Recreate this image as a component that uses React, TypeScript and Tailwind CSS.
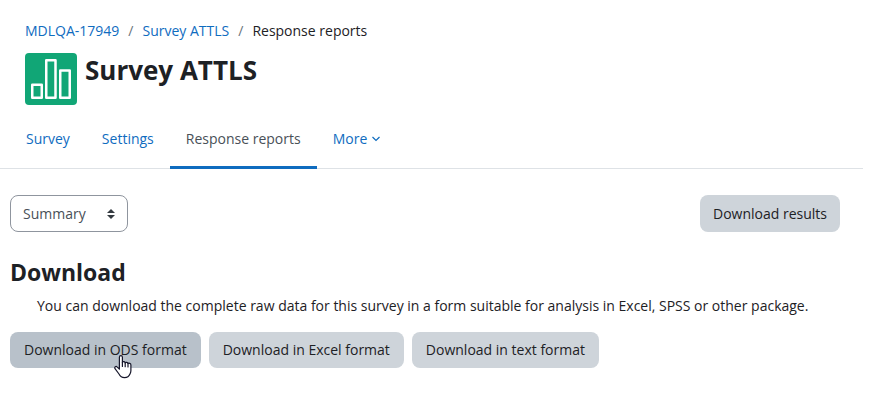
import { useState } from 'react'

const tabs = ['Survey', 'Settings', 'Response reports']

const formats = ['ODS', 'Excel', 'text']

function SurveyIcon() {
  return (
    <svg viewBox="0 0 52 52" className="size-[52px] shrink-0" aria-hidden="true">
      <rect width="52" height="52" rx="4" fill="#11a676" />
      <g fill="none" stroke="#fff" strokeWidth="2.5" strokeLinejoin="round">
        <rect x="7.25" y="31.75" width="9.5" height="13" />
        <rect x="21.25" y="7.25" width="9.25" height="37.5" />
        <rect x="35.25" y="17.500" width="9.5" height="27.25" />
      </g>
    </svg>
  )
}

function SelectArrows() {
  return (
    <svg
      viewBox="0 0 8 10"
      className="pointer-events-none absolute top-[14px] right-[13px] h-[10px] w-2"
      fill="#343a40"
      aria-hidden="true"
    >
      <path d="M4 0 0 4h8zM4 10 0 6h8z" />
    </svg>
  )
}

function HandPointer() {
  return (
    <svg
      viewBox="0 0 18 24"
      className="pointer-events-none absolute top-[23px] left-[104px] h-6 w-[18px]"
      fill="#fff"
      stroke="#16162a"
      strokeWidth="1.2"
      strokeLinejoin="round"
      strokeLinecap="round"
      aria-hidden="true"
    >
      <path d="M5.4 14.2V2.2c0-2 3-2 3 0v5.1c.6-1 2.6-.8 2.8.5.7-.8 2.5-.5 2.8.7.9-.6 2.900-.2 2.900 1.4v5.6c0 1.200-.3 2.200-.8 3.200-1 2.600-2.800 3.900-5.600 3.900-3 0-4.300-1.200-5.500-3.600L1 13.700c-.9-1.800 1-3 2.300-1.600z" />
      <path d="M8.400 7.300v4.200M11.200 7.800v3.900M14 8.500v3.500" fill="none" />
    </svg>
  )
}

function App() {
  const [view, setView] = useState('Summary')
  const [activeTab, setActiveTab] = useState('Response reports')

  return (
    <main className="min-h-screen bg-white pt-5 pr-[10px] font-['Open_Sans','Noto_Sans',sans-serif] text-sm leading-[22px] text-[#1d2125]">
      <header className="px-[25px]">
        <nav aria-label="Breadcrumb">
          <ol className="flex gap-[9px]">
            <li>
              <a href="#course" className="text-[#0f6cbf]">MDLQA-17949</a>
            </li>
            <li className="text-[#6a737b]" aria-hidden="true">/</li>
            <li>
              <a href="#survey" className="text-[#0f6cbf]">Survey ATTLS</a>
            </li>
            <li className="text-[#6a737b]" aria-hidden="true">/</li>
            <li aria-current="page">Response reports</li>
          </ol>
        </nav>
        <div className="mt-[11px] flex gap-2">
          <SurveyIcon />
          <h1 className="text-[26px] leading-[34px] font-bold">Survey ATTLS</h1>
        </div>
      </header>

      <nav aria-label="Survey sections" className="mt-1 flex border-b border-[#dee2e6] pl-[10px]">
        {tabs.map((tab) => (
          <a
            key={tab}
            href="#tab"
            onClick={() => setActiveTab(tab)}
            aria-current={tab === activeTab ? 'page' : undefined}
            className={`-mb-px flex h-[60px] items-center border-b-3 px-4 pt-[2px] ${
              tab === activeTab ? 'border-[#0f6cbf] text-[#495057]' : 'border-transparent text-[#0f6cbf]'
            }`}
          >
            {tab}
          </a>
        ))}
        <button
          type="button"
          className="-mb-px flex h-[60px] items-center gap-[5px] border-b-3 border-transparent px-4 pt-[2px] text-[#0f6cbf]"
        >
          More
          <svg viewBox="0 0 8 6" className="h-[6px] w-2" fill="none" stroke="currentColor" strokeWidth="1.2" aria-hidden="true">
            <path d="M.5 1 4 4.500 7.500 1" />
          </svg>
        </button>
      </nav>

      <div className="pt-[26px] pr-[23px] pl-[10px]">
        <div className="flex items-center justify-between">
          <div className="relative">
            <select
              aria-label="Report view"
              value={view}
              onChange={(event) => setView(event.target.value)}
              className="h-[37px] w-[118px] appearance-none rounded-lg border border-[#8f959e] bg-white px-3 text-[#495057]"
            >
              <option>Summary</option>
              <option>Scales</option>
              <option>Questions</option>
            </select>
            <SelectArrows />
          </div>
          <button type="button" className="h-[37px] rounded-lg bg-[#ced4da] px-[13px]">
            Download results
          </button>
        </div>

        <h2 className="mt-[26px] text-[23px] leading-7 font-bold">Download</h2>
        <p className="mt-[9px] pl-[27px]">
          You can download the complete raw data for this survey in a form suitable for analysis in Excel, SPSS or other
          package.
        </p>

        <div className="mt-[15px] flex gap-2">
          {formats.map((format) => (
            <div key={format} className="relative">
              <button
                type="button"
                className={`h-9 rounded-lg px-[14px] ${format === 'ODS' ? 'bg-[#b8c1ca]' : 'bg-[#ced4da]'}`}
              >
                Download in {format} format
              </button>
              {format === 'ODS' && <HandPointer />}
            </div>
          ))}
        </div>
      </div>
    </main>
  )
}

export default App
